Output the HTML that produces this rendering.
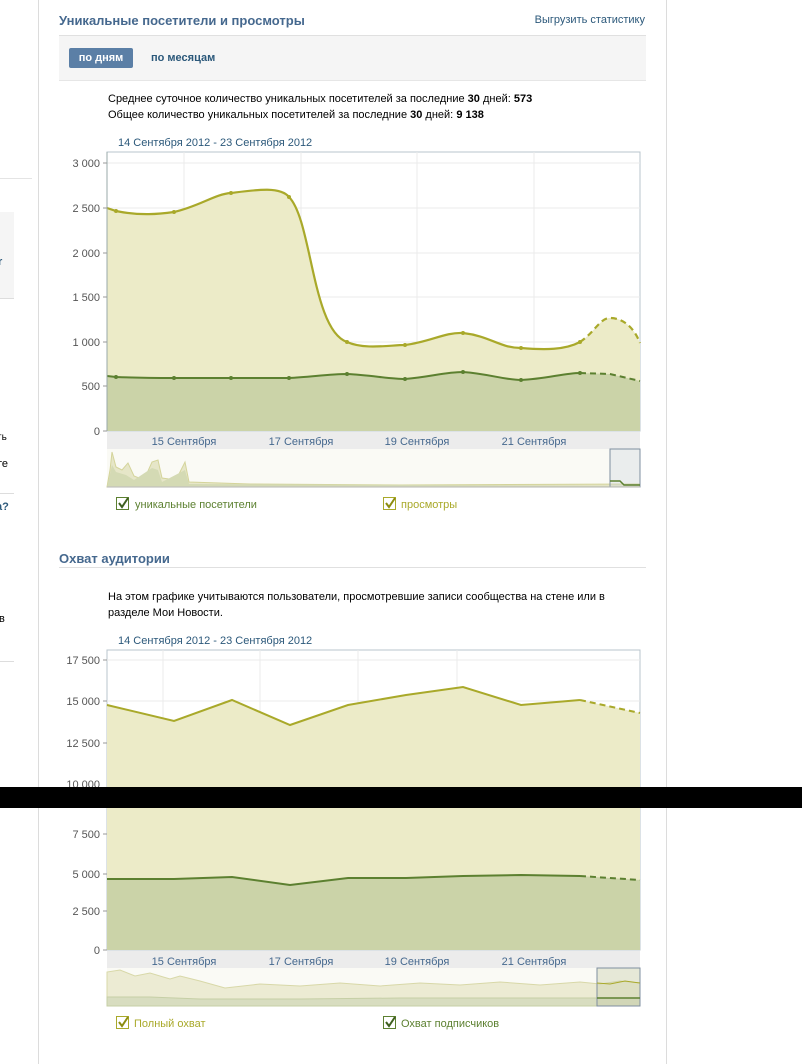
<!DOCTYPE html>
<html><head><meta charset="utf-8"><style>
body{margin:0;width:802px;height:1064px;background:#fff;position:relative;overflow:hidden;font-family:"Liberation Sans",sans-serif;font-size:11px;color:#000}
.a{position:absolute;white-space:nowrap}
.t{color:#45688e;font-weight:bold;font-size:13px}
.l{color:#2b587a}
svg text{font-family:"Liberation Sans",sans-serif;font-size:11px}
</style></head><body>
<div class="a" style="left:38px;top:0;width:1px;height:1064px;background:#dcdcdc"></div>
<div class="a" style="left:666px;top:0;width:1px;height:1064px;background:#dcdcdc"></div>
<div class="a" style="left:0;top:178px;width:32px;height:1px;background:#e4e4e4"></div>
<div class="a" style="left:0;top:212px;width:14px;height:86px;background:#f5f5f5"></div>
<div class="a" style="left:0;top:298px;width:14px;height:1px;background:#ddd"></div>
<div class="a" style="left:0;top:493px;width:14px;height:1px;background:#ddd"></div>
<div class="a" style="left:0;top:661px;width:14px;height:1px;background:#ddd"></div>
<div class="a l" style="left:-2px;top:256px;font-weight:bold">r</div>
<div class="a" style="left:-3px;top:432px;font-size:10px">ть</div>
<div class="a" style="left:-3px;top:458px">те</div>
<div class="a l" style="left:-4px;top:501px;font-weight:bold">а?</div>
<div class="a" style="left:-1px;top:613px">в</div>

<div class="a t" style="left:59px;top:13px">Уникальные посетители и просмотры</div>
<div class="a l" style="right:157px;top:14px">Выгрузить статистику</div>
<div class="a" style="left:59px;top:35px;width:587px;height:44px;background:#f5f5f5;border-top:1px solid #e0e0e0;border-bottom:1px solid #e6e6e6"></div>
<div class="a" style="left:69px;top:48px;width:64px;height:20px;background:#5b7fa6;border-radius:2px;color:#fff;font-weight:bold;text-align:center;line-height:20px">по дням</div>
<div class="a l" style="left:151px;top:52px;font-weight:bold">по месяцам</div>
<div class="a" style="left:108px;top:93px">Среднее суточное количество уникальных посетителей за последние <b>30</b> дней: <b>573</b></div>
<div class="a" style="left:108px;top:109px">Общее количество уникальных посетителей за последние <b>30</b> дней: <b>9 138</b></div>
<div class="a l" style="left:118px;top:137px">14 Сентября 2012 - 23 Сентября 2012</div>

<svg class="a" style="left:0;top:0" width="802" height="1064">
<rect x="107" y="152" width="533" height="279" fill="#fff" stroke="#b8c4cc"/>
<g stroke="#ebebeb"><line x1="107" y1="163" x2="640" y2="163"/><line x1="107" y1="208" x2="640" y2="208"/><line x1="107" y1="253" x2="640" y2="253"/><line x1="107" y1="297" x2="640" y2="297"/><line x1="107" y1="342" x2="640" y2="342"/><line x1="107" y1="386" x2="640" y2="386"/>
<line x1="184" y1="152" x2="184" y2="431"/><line x1="301" y1="152" x2="301" y2="431"/><line x1="417" y1="152" x2="417" y2="431"/><line x1="534" y1="152" x2="534" y2="431"/></g>
<path d="M107,208 L116,211 C140,216 160,214 174,212 C200,206 215,194 231,193 C255,190 280,186 289,197 C312,220 312,330 347,342 C365,350 390,345 405,345 C430,342 445,332 463,333 C490,336 500,348 521,348 C545,350 565,350 580,342 C595,332 600,318 610,318 C625,318 635,330 640,343 L640,431 L107,431Z" fill="#ecebc8"/>
<path d="M107,376 L116,377 C140,378 160,378 174,378 L231,378 L289,378 C310,377 330,374 347,374 C370,375 390,379 405,379 C430,377 445,372 463,372 C490,374 505,380 521,380 C545,379 565,373 580,373 L610,374 L640,381 L640,431 L107,431Z" fill="#cbd3a8"/>
<path d="M107,208 L116,211 C140,216 160,214 174,212 C200,206 215,194 231,193 C255,190 280,186 289,197 C312,220 312,330 347,342 C365,350 390,345 405,345 C430,342 445,332 463,333 C490,336 500,348 521,348 C545,350 565,350 580,342" fill="none" stroke="#a9a92a" stroke-width="2.2"/>
<path d="M580,342 C595,332 600,318 610,318 C625,318 635,330 640,343" fill="none" stroke="#a9a92a" stroke-width="2.2" stroke-dasharray="6,4"/>
<path d="M107,376 L116,377 C140,378 160,378 174,378 L231,378 L289,378 C310,377 330,374 347,374 C370,375 390,379 405,379 C430,377 445,372 463,372 C490,374 505,380 521,380 C545,379 565,373 580,373" fill="none" stroke="#5c8030" stroke-width="2"/>
<path d="M580,373 L610,374 L640,381" fill="none" stroke="#5c8030" stroke-width="2" stroke-dasharray="6,4"/>
<g fill="#a9a92a"><circle cx="116" cy="211" r="2"/><circle cx="174" cy="212" r="2"/><circle cx="231" cy="193" r="2"/><circle cx="289" cy="197" r="2"/><circle cx="347" cy="342" r="2"/><circle cx="405" cy="345" r="2"/><circle cx="463" cy="333" r="2"/><circle cx="521" cy="348" r="2"/><circle cx="580" cy="342" r="2"/></g>
<g fill="#5c8030"><circle cx="116" cy="377" r="2"/><circle cx="174" cy="378" r="2"/><circle cx="231" cy="378" r="2"/><circle cx="289" cy="378" r="2"/><circle cx="347" cy="374" r="2"/><circle cx="405" cy="379" r="2"/><circle cx="463" cy="372" r="2"/><circle cx="521" cy="380" r="2"/><circle cx="580" cy="373" r="2"/></g>
<line x1="107" y1="152" x2="107" y2="431" stroke="#9aa" />
<g fill="#555" text-anchor="end"><text x="100" y="167">3 000</text><text x="100" y="212">2 500</text><text x="100" y="257">2 000</text><text x="100" y="301">1 500</text><text x="100" y="346">1 000</text><text x="100" y="390">500</text><text x="100" y="435">0</text></g>
<g stroke="#999"><line x1="103" y1="163" x2="107" y2="163"/><line x1="103" y1="208" x2="107" y2="208"/><line x1="103" y1="253" x2="107" y2="253"/><line x1="103" y1="297" x2="107" y2="297"/><line x1="103" y1="342" x2="107" y2="342"/><line x1="103" y1="386" x2="107" y2="386"/><line x1="103" y1="431" x2="107" y2="431"/></g>
<rect x="107" y="432" width="533" height="17" fill="#ececec"/>
<g fill="#45688e" text-anchor="middle"><text x="184" y="445">15 Сентября</text><text x="301" y="445">17 Сентября</text><text x="417" y="445">19 Сентября</text><text x="534" y="445">21 Сентября</text></g>
<rect x="107" y="449" width="533" height="39" fill="#fafaf5"/>
<path d="M107,487 L110,470 L112,452 L116,467 L122,470 L128,463 L134,476 L144,480 L152,462 L158,460 L162,478 L176,480 L185,462 L189,482 L250,484 L400,485 L640,484 L640,487Z" fill="#e6e6c8" stroke="#d4d49a"/>
<path d="M107,487 L112,465 L116,472 L126,475 L134,480 L152,468 L158,470 L162,482 L185,470 L189,484 L640,486 L640,487Z" fill="#d4dab4"/>
<rect x="610" y="449" width="30" height="38" fill="rgba(200,210,220,0.3)" stroke="#7f8fa0"/>
<path d="M610,481 L620,481 L624,485 L640,485" fill="none" stroke="#5c8030" stroke-width="1.5"/>
<line x1="107" y1="487" x2="640" y2="487" stroke="#bbb"/>
<rect x="116.5" y="497.5" width="12" height="12" fill="#fff" stroke="#5c8030"/><path d="M119,503 L122,507 L128,498" fill="none" stroke="#3f6020" stroke-width="2"/>
<text x="135" y="508" fill="#5c8030">уникальные посетители</text>
<rect x="383.5" y="497.5" width="12" height="12" fill="#fff" stroke="#a9a92a"/><path d="M386,503 L389,507 L395,498" fill="none" stroke="#8d8d10" stroke-width="2"/>
<text x="401" y="508" fill="#a9a92a">просмотры</text>

<rect x="107" y="650" width="533" height="300" fill="#fff" stroke="#b8c4cc"/>
<g stroke="#ebebeb"><line x1="107" y1="660" x2="640" y2="660"/><line x1="107" y1="701" x2="640" y2="701"/><line x1="107" y1="743" x2="640" y2="743"/>
<line x1="163" y1="650" x2="163" y2="950"/><line x1="260" y1="650" x2="260" y2="950"/><line x1="358" y1="650" x2="358" y2="950"/><line x1="457" y1="650" x2="457" y2="950"/></g>
<path d="M107,705 L174,721 L232,700 L290,725 L348,705 L406,695 L463,687 L521,705 L580,700 L640,713 L640,950 L107,950Z" fill="#ecebc8"/>
<path d="M107,879 L174,879 L232,877 L290,885 L348,878 L406,878 L463,876 L521,875 L580,876 L640,880 L640,950 L107,950Z" fill="#cbd3a8"/>
<path d="M107,705 L174,721 L232,700 L290,725 L348,705 L406,695 L463,687 L521,705 L580,700" fill="none" stroke="#a9a92a" stroke-width="2"/>
<path d="M580,700 L640,713" fill="none" stroke="#a9a92a" stroke-width="2" stroke-dasharray="6,4"/>
<path d="M107,879 L174,879 L232,877 L290,885 L348,878 L406,878 L463,876 L521,875 L580,876" fill="none" stroke="#5c8030" stroke-width="2"/>
<path d="M580,876 L640,880" fill="none" stroke="#5c8030" stroke-width="2" stroke-dasharray="6,4"/>
<g fill="#555" text-anchor="end"><text x="100" y="664">17 500</text><text x="100" y="705">15 000</text><text x="100" y="747">12 500</text><text x="100" y="788">10 000</text><text x="100" y="838">7 500</text><text x="100" y="878">5 000</text><text x="100" y="915">2 500</text><text x="100" y="954">0</text></g>
<g stroke="#999"><line x1="103" y1="660" x2="107" y2="660"/><line x1="103" y1="701" x2="107" y2="701"/><line x1="103" y1="743" x2="107" y2="743"/><line x1="103" y1="834" x2="107" y2="834"/><line x1="103" y1="874" x2="107" y2="874"/><line x1="103" y1="911" x2="107" y2="911"/><line x1="103" y1="950" x2="107" y2="950"/></g>
<rect x="107" y="951" width="533" height="17" fill="#ececec"/>
<g fill="#45688e" text-anchor="middle"><text x="184" y="965">15 Сентября</text><text x="301" y="965">17 Сентября</text><text x="417" y="965">19 Сентября</text><text x="534" y="965">21 Сентября</text></g>
<rect x="107" y="968" width="533" height="38" fill="#fafaf5"/>
<path d="M107,1006 L107,972 L120,970 L135,976 L150,973 L170,979 L180,976 L200,981 L225,988 L260,984 L300,986 L340,983 L380,986 L420,983 L460,985 L500,982 L540,985 L580,982 L600,984 L620,981 L640,983 L640,1006Z" fill="#ecebd3" stroke="#d8d8a8"/>
<path d="M107,1006 L107,997 L150,997 L200,999 L300,999 L400,998 L500,998 L600,998 L640,998 L640,1006Z" fill="#d8ddc0" stroke="#c6cfa6"/>
<rect x="597" y="968" width="43" height="38" fill="rgba(200,205,170,0.4)" stroke="#7f8fa0"/>
<path d="M597,983 L610,984 L625,981 L640,983" fill="none" stroke="#a9a92a"/>
<path d="M597,998 L640,998" fill="none" stroke="#5c8030" stroke-width="1.5"/>
<rect x="116.5" y="1016.5" width="12" height="12" fill="#fff" stroke="#a9a92a"/><path d="M119,1022 L122,1026 L128,1017" fill="none" stroke="#8d8d10" stroke-width="2"/>
<text x="134" y="1027" fill="#a9a92a">Полный охват</text>
<rect x="383.5" y="1016.5" width="12" height="12" fill="#fff" stroke="#5c8030"/><path d="M386,1022 L389,1026 L395,1017" fill="none" stroke="#3f6020" stroke-width="2"/>
<text x="401" y="1027" fill="#5c8030">Охват подписчиков</text>
<rect x="0" y="787" width="802" height="21" fill="#000"/>
</svg>

<div class="a t" style="left:59px;top:551px">Охват аудитории</div>
<div class="a" style="left:59px;top:567px;width:587px;height:1px;background:#e0e0e0"></div>
<div class="a" style="left:108px;top:591px">На этом графике учитываются пользователи, просмотревшие записи сообщества на стене или в</div>
<div class="a" style="left:108px;top:607px">разделе Мои Новости.</div>
<div class="a l" style="left:118px;top:635px">14 Сентября 2012 - 23 Сентября 2012</div>
</body></html>
